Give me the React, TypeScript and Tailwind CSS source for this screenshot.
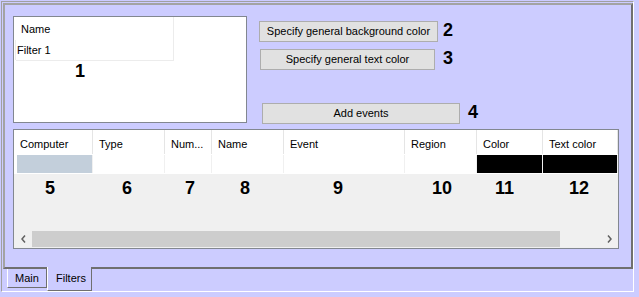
// Filters tab of the report settings dialog
const columns = [
  { title: "Computer", width: 79 },
  { title: "Type", width: 72 },
  { title: "Num...", width: 47 },
  { title: "Name", width: 72 },
  { title: "Event", width: 121 },
  { title: "Region", width: 72 },
  { title: "Color", width: 66 },
  { title: "Text color", width: 75 },
];

// callout numbers over the grid, x is relative to the grid interior
const marks = [
  { n: "5", x: 31 },
  { n: "6", x: 108 },
  { n: "7", x: 171 },
  { n: "8", x: 226 },
  { n: "9", x: 319 },
  { n: "10", x: 418 },
  { n: "11", x: 481 },
  { n: "12", x: 555 },
];

const Mark = ({ n, className = "", left }: { n: string; className?: string; left?: number }) => (
  <span
    style={left !== undefined ? { left } : undefined}
    className={`font-['Liberation_Sans',Arial,sans-serif] text-[18px] leading-[18px] font-bold text-black ${className}`}
  >
    {n}
  </span>
);

const Btn = ({ title, w }: { title: string; w: string }) => (
  <div className={`${w} h-[21px] flex items-center justify-center border border-[#adadad] bg-[#e1e1e1] text-[11px] text-black`}>
    {title}
  </div>
);

const App = () => {
  return (
    <div className="w-[639px] h-[297px] bg-[#ccccff] p-[1px] font-['Liberation_Sans',Arial,sans-serif] text-[11px] text-black overflow-hidden">
      <div className="w-[633px] h-[291px] border-l border-t border-[#a0a0a0] border-r-white border-b-white border-r border-b">
        {/* tab page */}
        <div className="ml-[1px] mt-[1px] w-[630px] h-[266px] border-2 border-t-[#a3a3a3] border-l-[#a3a3a3] border-r-[#6f6f6f] border-b-[#6f6f6f] pl-[8px] pt-[11px]">
          <div className="flex items-start">
            <div className="relative w-[234px] h-[107px] border border-[#828790] bg-white">
              <div className="w-[158px] ml-[2px] border-r border-b border-[#ececec]">
                <div className="h-[23px] pl-[5px] flex items-center pt-[2px]">Name</div>
                <div className="h-[20px] pl-[1px] flex items-center border-l border-[#ececec] -ml-[1px]">Filter 1</div>
              </div>
              <Mark n="1" className="absolute left-[61px] top-[45px]" />
            </div>

            <div className="ml-[12px] flex flex-col">
              <div className="mt-[5px] flex items-center">
                <Btn title="Specify general background color" w="w-[179px]" />
                <Mark n="2" className="ml-[5px] mb-[3px]" />
              </div>
              <div className="mt-[7px] ml-[1px] flex items-center">
                <Btn title="Specify general text color" w="w-[175px]" />
                <Mark n="3" className="ml-[8px] mb-[3px]" />
              </div>
              <div className="mt-[33px] ml-[3px] flex items-center">
                <Btn title="Add events" w="w-[198px]" />
                <Mark n="4" className="ml-[8px] mb-[3px]" />
              </div>
            </div>
          </div>

          {/* events grid */}
          <div className="mt-[5px] w-[606px] h-[120px] border border-[#828790] bg-[#f0f0f0] flex flex-col">
            <div className="h-[24px] flex bg-white">
              {columns.map((c) => (
                <div
                  key={c.title}
                  style={{ width: c.width }}
                  className="shrink-0 pl-[6px] pt-[6px] border-r border-[#e5e5e5] whitespace-nowrap overflow-hidden"
                >
                  {c.title}
                </div>
              ))}
            </div>
            <div className="h-[20px] flex bg-white py-[1px]">
              {columns.map((c, i) => (
                <div key={c.title} style={{ width: c.width }} className="shrink-0 border-r border-[#f0f0f0]">
                  {i === 0 && <div className="ml-[3px] h-full bg-[#c3cfdb]" />}
                  {i >= 6 && <div className="h-full bg-black" />}
                </div>
              ))}
            </div>
            <div className="relative h-[56px]">
              {marks.map((m) => (
                <Mark key={m.n} n={m.n} left={m.x} className="absolute top-[5px]" />
              ))}
            </div>
            <div className="h-[17px] flex items-stretch pt-[1px]">
              <div className="w-[18px] flex items-center justify-center">
                <svg width="5" height="8" viewBox="0 0 5 8">
                  <path d="M4 0.5 L1 4 L4 7.5" fill="none" stroke="#606060" strokeWidth="1.5" />
                </svg>
              </div>
              <div className="w-[528px] bg-[#cdcdcd]" />
              <div className="flex-1" />
              <div className="w-[18px] flex items-center justify-center">
                <svg width="5" height="8" viewBox="0 0 5 8">
                  <path d="M1 0.5 L4 4 L1 7.5" fill="none" stroke="#606060" strokeWidth="1.5" />
                </svg>
              </div>
            </div>
          </div>
        </div>

        {/* tabs */}
        <div className="flex items-start">
          <div className="ml-[5px] w-[40px] h-[19px] border-l border-white border-r border-b border-r-[#6f6f6f] border-b-[#6f6f6f] flex items-center pl-[7px] text-[11px]">
            Main
          </div>
          <div className="relative -mt-[2px] w-[45px] h-[24px] bg-[#ccccff] border-l border-white border-r border-b border-r-[#6f6f6f] border-b-[#6f6f6f] flex items-center pl-[8px]">
            Filters
          </div>
        </div>
      </div>
    </div>
  );
};

export default App;
